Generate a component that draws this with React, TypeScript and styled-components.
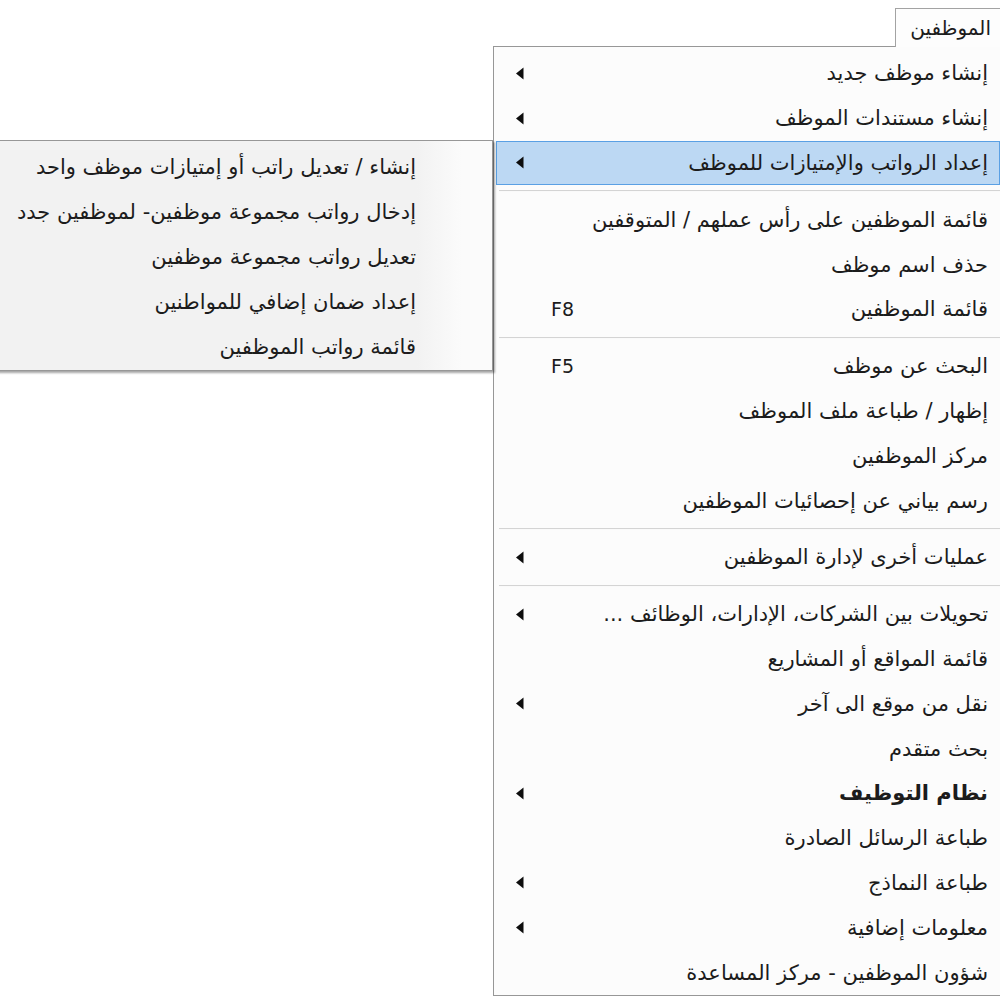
import styled, { createGlobalStyle } from "styled-components";

const GlobalStyle = createGlobalStyle`
  html, body {
    margin: 0;
    padding: 0;
    background: #ffffff;
  }
`;

type Entry =
  | { kind: "item"; label: string; arrow?: boolean; shortcut?: string; bold?: boolean; active?: boolean }
  | { kind: "sep" };

const mainMenu: Entry[] = [
  { kind: "item", label: "إنشاء موظف جديد", arrow: true },
  { kind: "item", label: "إنشاء مستندات الموظف", arrow: true },
  { kind: "item", label: "إعداد الرواتب والإمتيازات للموظف", arrow: true, active: true },
  { kind: "sep" },
  { kind: "item", label: "قائمة الموظفين على رأس عملهم / المتوقفين" },
  { kind: "item", label: "حذف اسم موظف" },
  { kind: "item", label: "قائمة الموظفين", shortcut: "F8" },
  { kind: "sep" },
  { kind: "item", label: "البحث عن موظف", shortcut: "F5" },
  { kind: "item", label: "إظهار / طباعة ملف الموظف" },
  { kind: "item", label: "مركز الموظفين" },
  { kind: "item", label: "رسم بياني عن إحصائيات الموظفين" },
  { kind: "sep" },
  { kind: "item", label: "عمليات أخرى لإدارة الموظفين", arrow: true },
  { kind: "sep" },
  { kind: "item", label: "تحويلات بين الشركات، الإدارات، الوظائف ...", arrow: true },
  { kind: "item", label: "قائمة المواقع أو المشاريع" },
  { kind: "item", label: "نقل من موقع الى آخر", arrow: true },
  { kind: "item", label: "بحث متقدم" },
  { kind: "item", label: "نظام التوظيف", arrow: true, bold: true },
  { kind: "item", label: "طباعة الرسائل الصادرة" },
  { kind: "item", label: "طباعة النماذج", arrow: true },
  { kind: "item", label: "معلومات إضافية", arrow: true },
  { kind: "item", label: "شؤون الموظفين - مركز المساعدة" },
];

const salarySubmenu = [
  "إنشاء / تعديل راتب أو إمتيازات موظف واحد",
  "إدخال رواتب مجموعة موظفين- لموظفين جدد",
  "تعديل رواتب مجموعة موظفين",
  "إعداد ضمان إضافي للمواطنين",
  "قائمة رواتب الموظفين",
];

function Arrow() {
  return (
    <svg width="9" height="13" viewBox="0 0 9 13">
      <polygon points="8.5,0.5 8.5,12.5 1,6.5" fill="#0d0d0d" />
    </svg>
  );
}

export default function App() {
  return (
    <St.Page>
      <GlobalStyle />
      <St.MenuBar>
        <St.Tab>الموظفين</St.Tab>
      </St.MenuBar>
      <St.Dropdown>
        {mainMenu.map((entry, i) =>
          entry.kind === "sep" ? (
            <St.Separator key={i} />
          ) : (
            <St.Item key={i} $active={entry.active}>
              <St.Label $bold={entry.bold}>{entry.label}</St.Label>
              <St.Shortcut>{entry.shortcut}</St.Shortcut>
              <St.ArrowCell>{entry.arrow && <Arrow />}</St.ArrowCell>
              {entry.active && (
                <St.Submenu>
                  {salarySubmenu.map((label) => (
                    <St.SubItem key={label}>{label}</St.SubItem>
                  ))}
                </St.Submenu>
              )}
            </St.Item>
          )
        )}
      </St.Dropdown>
    </St.Page>
  );
}

const menuFont = `"DejaVu Sans", "Noto Sans", sans-serif`;

const St = {
  Page: styled.div`
    width: 1000px;
    height: 1000px;
    overflow: hidden;
    background: #ffffff;
    padding-top: 8px;
    box-sizing: border-box;
    font-family: ${menuFont};
    color: #1c1c1c;
  `,
  MenuBar: styled.div`
    display: flex;
    justify-content: flex-end;
  `,
  Tab: styled.div`
    position: relative;
    z-index: 2;
    width: 106px;
    height: 39px;
    margin-right: -1px;
    margin-bottom: -1px;
    box-sizing: border-box;
    border: 1px solid #a3a3a3;
    border-bottom: none;
    background: #fdfdfd;
    direction: rtl;
    display: flex;
    align-items: center;
    padding-right: 9px;
    font-size: 20px;
  `,
  Dropdown: styled.div`
    position: relative;
    margin-left: 493px;
    width: 510px;
    box-sizing: border-box;
    border: 1px solid #979797;
    background: #fcfcfc;
    padding: 4px 2px 0 2px;
    direction: rtl;
    display: flex;
    flex-direction: column;
  `,
  Item: styled.div<{ $active?: boolean }>`
    position: relative;
    height: 44.8px;
    flex-shrink: 0;
    box-sizing: border-box;
    display: flex;
    align-items: center;
    padding-right: 11px;
    border: 1px solid ${({ $active }) => ($active ? "#5aa0e4" : "transparent")};
    background: ${({ $active }) => ($active ? "#bcd8f3" : "transparent")};
    font-size: 21px;
  `,
  Label: styled.span<{ $bold?: boolean }>`
    flex: 1;
    white-space: nowrap;
    font-weight: ${({ $bold }) => ($bold ? 700 : 400)};
  `,
  Shortcut: styled.span`
    width: 54px;
    direction: ltr;
    text-align: left;
    padding-left: 10px;
    box-sizing: border-box;
    font-size: 19px;
  `,
  ArrowCell: styled.span`
    width: 44px;
    display: flex;
    justify-content: center;
    align-items: center;
  `,
  Separator: styled.div`
    height: 12px;
    flex-shrink: 0;
    display: flex;
    align-items: center;
    margin-left: 3px;

    &::after {
      content: "";
      flex: 1;
      border-top: 1px solid #d4d4d4;
      border-bottom: 1px solid #fafafa;
    }
  `,
  Submenu: styled.div`
    position: absolute;
    top: -2px;
    right: calc(100% + 4px);
    width: 540px;
    box-sizing: border-box;
    padding: 4px 0 0 0;
    border: 1px solid #979797;
    background: linear-gradient(to left, #fbfbfb 0, #fbfbfb 30px, #f2f2f2 75px, #f2f2f2 100%);
    box-shadow: 2px 2px 2px rgba(0, 0, 0, 0.35);
    display: flex;
    flex-direction: column;
  `,
  SubItem: styled.div`
    height: 45px;
    display: flex;
    align-items: center;
    padding-right: 76px;
    white-space: nowrap;
    font-size: 21px;
  `,
};
